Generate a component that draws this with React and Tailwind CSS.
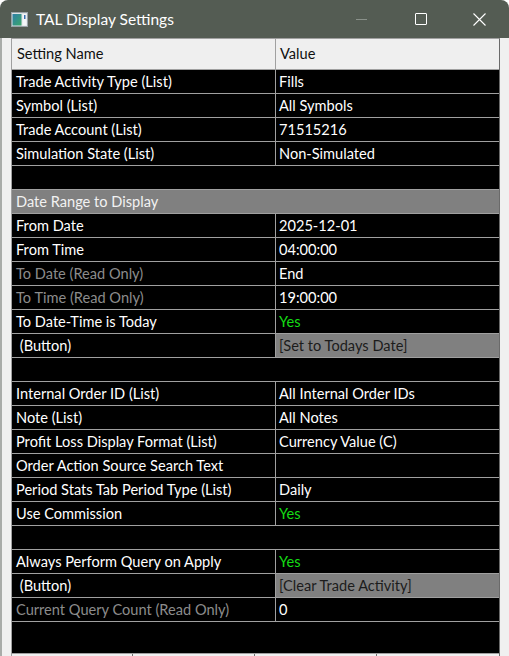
import React from "react";

const rows = [
  { name: "Trade Activity Type (List)", value: "Fills" },
  { name: "Symbol (List)", value: "All Symbols" },
  { name: "Trade Account (List)", value: "71515216" },
  { name: "Simulation State (List)", value: "Non-Simulated" },
  { blank: true },
  { section: "Date Range to Display" },
  { name: "From Date", value: "2025-12-01" },
  { name: "From Time", value: "04:00:00" },
  { name: "To Date (Read Only)", value: "End", readOnly: true },
  { name: "To Time (Read Only)", value: "19:00:00", readOnly: true },
  { name: "To Date-Time is Today", value: "Yes", yes: true },
  { name: " (Button)", value: "[Set to Todays Date]", button: true },
  { blank: true },
  { name: "Internal Order ID (List)", value: "All Internal Order IDs" },
  { name: "Note (List)", value: "All Notes" },
  { name: "Profit Loss Display Format (List)", value: "Currency Value (C)" },
  { name: "Order Action Source Search Text", value: "" },
  { name: "Period Stats Tab Period Type (List)", value: "Daily" },
  { name: "Use Commission", value: "Yes", yes: true },
  { blank: true },
  { name: "Always Perform Query on Apply", value: "Yes", yes: true },
  { name: " (Button)", value: "[Clear Trade Activity]", button: true },
  { name: "Current Query Count (Read Only)", value: "0", readOnly: true },
];

function AppIcon() {
  return (
    <svg width="17" height="15" viewBox="0 0 17 15" className="shrink-0">
      <defs>
        <linearGradient id="pane" x1="0" y1="0" x2="1" y2="1">
          <stop offset="0" stopColor="#2f7fa8" />
          <stop offset="1" stopColor="#3aa86a" />
        </linearGradient>
      </defs>
      <rect x="0.5" y="0.5" width="16" height="14" fill="#dfe3e6" stroke="#9aa3a8" />
      <rect x="1.5" y="2" width="9" height="11.5" fill="url(#pane)" />
      <rect x="11.5" y="2" width="4" height="11.5" fill="#f4f6f8" />
      <rect x="13" y="3" width="1.5" height="4" fill="#3a6fb0" />
    </svg>
  );
}

function Row({ r }) {
  if (r.blank) {
    return <div className="h-[24px] border-b border-[#a0a0a0] bg-black" />;
  }
  if (r.section) {
    return (
      <div className="h-[24px] border-b border-[#a0a0a0] bg-[#808080] pl-[4px] flex items-center text-[#f2f2f2]">
        {r.section}
      </div>
    );
  }
  return (
    <div className="h-[24px] border-b border-[#a0a0a0] bg-black flex">
      <div
        className={`w-[264px] shrink-0 border-r border-[#a0a0a0] pl-[4px] flex items-center whitespace-pre ${
          r.readOnly ? "text-[#8c8c8c]" : "text-white"
        }`}
      >
        {r.name}
      </div>
      <div
        className={`flex-1 pl-[3px] flex items-center whitespace-pre ${
          r.button
            ? "bg-[#808080] text-[#1c1c1c]"
            : r.yes
            ? "text-[#14dc14]"
            : "text-white"
        }`}
      >
        {r.value}
      </div>
    </div>
  );
}

export default function App() {
  return (
    <div
      className="w-[509px] h-[656px] bg-white overflow-hidden text-[14.6px]"
      style={{ fontFamily: "'Segoe UI', Lato, 'Noto Sans', sans-serif" }}
    >
      <div className="w-[509px] h-[656px] flex flex-col rounded-t-[8px] overflow-hidden">
        {/* title bar */}
        <div className="h-[38px] shrink-0 bg-[#545c53] flex items-center pl-[11px] text-white">
          <AppIcon />
          <span className="ml-[8px] mt-[1px] text-[15.5px]">TAL Display Settings</span>
          <div className="ml-auto flex items-center h-full">
            <div className="w-[59px] h-full flex items-center justify-center">
              <div className="w-[11px] h-px bg-[#8a918a]" />
            </div>
            <div className="w-[59px] h-full flex items-center justify-center">
              <div className="w-[12px] h-[12px] border border-white rounded-[1px]" />
            </div>
            <div className="w-[59px] h-full flex items-center justify-center">
              <svg width="13" height="13" viewBox="0 0 13 13">
                <path d="M0.5 0.5 L12.5 12.5 M12.5 0.5 L0.5 12.5" stroke="white" strokeWidth="1.1" />
              </svg>
            </div>
          </div>
        </div>

        {/* body */}
        <div className="flex-1 bg-[#f0f0f0] border-l-[2px] border-[#a9aca9] pl-[9px] pr-[9px] flex flex-col">
          <div className="border-l border-r border-t border-[#a0a0a0] border-r-[#6a6a6a]">
            <div className="h-[31px] border-b border-[#a0a0a0] bg-[#efefef] flex text-[#101010]">
              <div className="w-[264px] shrink-0 border-r border-[#a0a0a0] pl-[5px] flex items-center">
                Setting Name
              </div>
              <div className="flex-1 pl-[4px] flex items-center">Value</div>
            </div>
            {rows.map((r, i) => (
              <Row key={i} r={r} />
            ))}
            <div className="h-[32px] border-b border-[#a0a0a0] bg-black" />
          </div>
          {/* next grid's column header edge */}
          <div className="h-[4px] flex border-l border-[#a0a0a0] border-r border-r-[#6a6a6a]">
            <div className="w-[121px] border-r border-[#707070]" />
            <div className="w-[122px] border-r border-[#707070]" />
            <div className="w-[122px] border-r border-[#707070]" />
            <div className="flex-1" />
          </div>
        </div>
      </div>
    </div>
  );
}
